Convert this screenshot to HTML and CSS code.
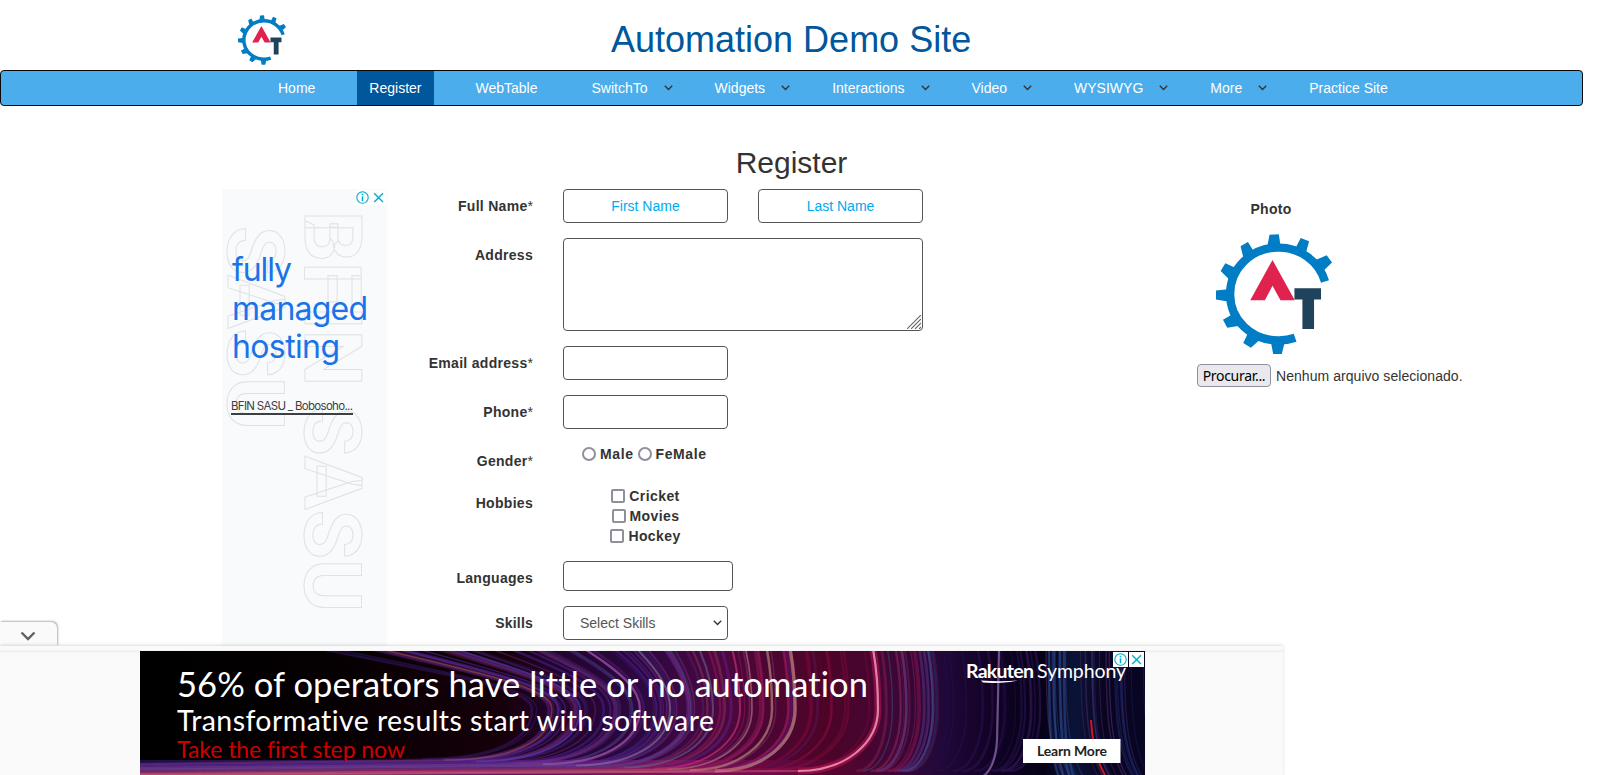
FILE: index.html
```
<!DOCTYPE html>
<html lang="en">
<head>
<meta charset="utf-8">
<title>Register</title>
<link rel="stylesheet" href="styles.css">
</head>
<body>
<svg width="0" height="0" class="defs">
  <symbol id="logo" viewBox="107 131 349 361">
    <path d="M435 274A145 142 0 0 0 292 172A143 140 0 0 0 149.500 312A143 139 0 0 0 292 451A143 139 0 0 0 345 443" fill="none" stroke="#007dc5" stroke-width="25"/>
    <path fill="#007dc5" d="M268 133L296 132 301 165 262 165ZM362 143L387 153 378 187 345 175ZM440 195L456 217 432 240 405 210ZM203 155L181 168 190 205 220 182ZM135 219L121 242 147 268 170 235ZM107 301V328L143 334V297ZM128 389L141 413 178 407 155 373ZM202 432L189 459 212 473 238 450ZM272 455L279 492H305L314 455Z"/>
    <path fill="#e0234e" d="M277 209L344 330H301L277 287 254 330H210Z"/>
    <path fill="#20435c" d="M343 294H423V328H402V417H367V328H343Z"/>
  </symbol>
  <symbol id="info" viewBox="0 0 15 15"><circle cx="7.5" cy="7.5" r="5.7" fill="none" stroke="#00aecd" stroke-width="1.1"/><path d="M7.500 6.300V11.200M7.500 3.700V5.200" fill="none" stroke="#00aecd" stroke-width="1.5"/></symbol>
  <symbol id="close" viewBox="0 0 15 15"><path d="M3.2 3.2L12 12M12 3.2L3.2 12" stroke="#00aecd" stroke-width="1.4"/></symbol>
  <symbol id="chev" viewBox="0 0 9 6"><path d="M.8 .8L4.5 4.5 8.2 .8" fill="none" stroke="currentColor" stroke-width="1.4"/></symbol>
</svg>
<div class="page">
  <header class="header">
    <svg class="logo"><use href="#logo"/></svg>
    <h1 class="title">Automation Demo Site</h1>
  </header>
  <nav class="nav">
    <a class="item">Home</a>
    <a class="item active">Register</a>
    <a class="item">WebTable</a>
    <a class="item drop">SwitchTo<svg class="chev"><use href="#chev"/></svg></a>
    <a class="item drop">Widgets<svg class="chev"><use href="#chev"/></svg></a>
    <a class="item drop">Interactions<svg class="chev"><use href="#chev"/></svg></a>
    <a class="item drop">Video<svg class="chev"><use href="#chev"/></svg></a>
    <a class="item drop">WYSIWYG<svg class="chev"><use href="#chev"/></svg></a>
    <a class="item drop">More<svg class="chev"><use href="#chev"/></svg></a>
    <a class="item">Practice Site</a>
  </nav>
  <h2 class="heading">Register</h2>
  <main class="content">
    <aside class="side-ad">
      <svg width="165" height="460" viewBox="222 189 165 460">
        <g class="outline">
          <text transform="translate(305 211) rotate(90)" textLength="401">BFIN SASU</text>
          <text transform="translate(228 226) rotate(90)" textLength="204">SASU</text>
        </g>
        <g class="slogan">
          <text x="232" y="281" textLength="60">fully</text>
          <text x="232" y="320" textLength="136">managed</text>
          <text x="232" y="358" textLength="108">hosting</text>
        </g>
        <text class="advertiser" x="231" y="410" textLength="122">BFIN SASU _ Bobosoho...</text>
        <rect x="231" y="413" width="122" height="2" fill="#3c4043"/>
        <rect x="355" y="190" width="31" height="15" fill="#fff"/>
        <use href="#info" x="355" y="190" width="15" height="15"/>
        <use href="#close" x="371" y="190" width="15" height="15"/>
      </svg>
    </aside>
    <form class="form">
      <label class="label">Full Name<i>*</i></label>
      <div class="pair"><div class="field hint">First Name</div><div class="field hint">Last Name</div></div>
      <label class="label">Address</label>
      <div class="area"><svg class="grip" viewBox="0 0 14 14"><path d="M0 14L14 0M4 14L14 4M8 14L14 8M12 14L14 12" stroke="#666" stroke-width="1.1"/></svg></div>
      <label class="label">Email address<i>*</i></label>
      <div class="field"></div>
      <label class="label">Phone<i>*</i></label>
      <div class="field"></div>
      <label class="label">Gender<i>*</i></label>
      <div class="radios"><span class="dot"></span>Male<span class="dot"></span>FeMale</div>
      <label class="label">Hobbies</label>
      <div class="checks">
        <div class="check"><span class="box"></span>Cricket</div>
        <div class="check"><span class="box"></span>Movies</div>
        <div class="check"><span class="box"></span>Hockey</div>
      </div>
      <label class="label">Languages</label>
      <div class="field langs"></div>
      <label class="label skills">Skills</label>
      <div class="field select">Select Skills<svg class="chev"><use href="#chev"/></svg></div>
    </form>
    <section class="photo">
      <div class="photo-title">Photo</div>
      <svg class="photo-logo"><use href="#logo"/></svg>
      <div class="file"><span class="browse">Procurar...</span><span class="none">Nenhum arquivo selecionado.</span></div>
    </section>
  </main>
</div>
<div class="anchor">
  <div class="tab"><svg width="16" height="10" viewBox="0 0 16 10"><path d="M1.5 1.5L8 8 14.500 1.500" fill="none" stroke="#616161" stroke-width="2.4"/></svg></div>
  <div class="tray">
    <svg class="banner" width="1005" height="124" viewBox="140 651 1005 124">
      <defs>
        <linearGradient id="bg">
          <stop offset="0" stop-color="#000"/><stop offset=".2" stop-color="#060003"/><stop offset=".36" stop-color="#16000a"/><stop offset=".41" stop-color="#22042a"/><stop offset=".5" stop-color="#2c0840"/><stop offset=".58" stop-color="#4c083e"/><stop offset=".68" stop-color="#4c0426"/><stop offset=".74" stop-color="#440634"/><stop offset=".8" stop-color="#200838"/><stop offset=".85" stop-color="#100224"/><stop offset=".9" stop-color="#060218"/><stop offset=".93" stop-color="#0a1438"/><stop offset=".96" stop-color="#0a0420"/><stop offset="1" stop-color="#080524"/>
        </linearGradient>
        <linearGradient id="floor">
          <stop offset="0" stop-color="#1c1040"/><stop offset=".3" stop-color="#3c1468"/><stop offset=".55" stop-color="#7c1060"/><stop offset=".7" stop-color="#600838" stop-opacity=".4"/><stop offset=".75" stop-color="#600838" stop-opacity="0"/>
        </linearGradient>
      </defs>
      <rect x="140" y="651" width="1005" height="124" fill="url(#bg)"/>
      <rect x="140" y="760" width="1005" height="15" fill="url(#floor)"/>
      <g id="strands" transform="translate(140 651)" fill="none"></g>
      <path d="M1091 720Q1093 755 1105 775" fill="none" stroke="#d01828" stroke-width="2"/>
      <g class="copy">
        <text x="177" y="697" font-size="34.500" textLength="691">56% of operators have little or no automation</text>
        <text x="177" y="731" font-size="28.500" textLength="537">Transformative results start with software</text>
        <text x="177" y="758" font-size="23" textLength="228" class="red">Take the first step now</text>
        <text x="966" y="678" font-size="19.500" textLength="68" class="strong">Rakuten</text>
        <text x="1037" y="678" font-size="19.500" textLength="89">Symphony</text>
      </g>
      <path d="M981 680.500Q1000 682 1018 680.500L1010 682Q995 683.500 983 682.500Z" fill="#fff"/>
      <rect x="1023" y="739" width="97.500" height="24" fill="#fff"/>
      <text x="1037" y="755.500" class="learn" textLength="70">Learn More</text>
      <rect x="1113" y="652" width="15" height="15" fill="#fff"/><rect x="1129" y="652" width="15" height="15" fill="#fff"/>
      <use href="#info" x="1113" y="652" width="15" height="15"/><use href="#close" x="1129" y="652" width="15" height="15"/>
    </svg>
  </div>
</div>
<script src="strands.js"></script>
</body>
</html>
```
FILE: styles.css
```
* { box-sizing: border-box; }
body { margin: 0; height: 775px; overflow: hidden; position: relative; background: #fff; color: #333; font: 14px/20px "Liberation Sans", Arial, sans-serif; }
svg { display: block; }
.defs { position: absolute; }
.page { width: 1583px; }
.header { height: 70px; padding: 14px 0 0 238px; display: flex; }
.logo { width: 48px; height: 52px; }
.title { margin: 6px 0 0 325px; font-size: 36px; line-height: 40px; font-weight: 400; color: #00579c; white-space: nowrap; }
.nav { height: 36px; border: 1px solid #080808; border-radius: 4px; background: #4badeb; padding-left: 265px; display: flex; gap: 30px; }
.item { display: flex; align-items: center; padding: 0 12px; height: 34px; color: #fff; white-space: nowrap; }
.item.active { background: #00579c; }
.item.drop { padding-right: 0; }
.chev { width: 9px; height: 6px; color: #333; flex: none; }
.item .chev { margin-left: 16px; }
.heading { margin: 40px 0 9px; text-align: center; font-size: 30px; line-height: 34px; font-weight: 400; }
.content { display: flex; padding-left: 222px; }
.side-ad { width: 165px; height: 460px; background: #f8fafc; }
.outline text { font: 700 80px Roboto, sans-serif; fill: none; stroke: #e0e2e5; stroke-width: 1; }
.slogan text { font: 400 32px Inter, sans-serif; fill: #1a73e8; }
.advertiser { font: 11.500px Inter, sans-serif; fill: #3c4043; }
.form { margin-left: 16px; width: 520px; display: grid; grid-template-columns: 130px 1fr; column-gap: 30px; row-gap: 15px; grid-template-rows: 34px 93px 34px 34px 27px 60px 30px 34px; align-items: start; }
.label { text-align: right; font-weight: 700; letter-spacing: .3px; padding-top: 7px; white-space: nowrap; }
.label.skills { letter-spacing: .2px; }
.label i { font-style: normal; font-weight: 400; letter-spacing: 0; }
.pair { display: flex; gap: 30px; }
.field { width: 165px; height: 34px; border: 1px solid #555; border-radius: 4px; }
.hint { color: #00a9f0; line-height: 32px; text-align: center; }
.area { position: relative; width: 360px; height: 93px; border: 1px solid #555; border-radius: 4px; }
.grip { position: absolute; right: 1px; bottom: 1px; width: 14px; height: 14px; }
.radios { display: flex; align-items: center; font-weight: 700; letter-spacing: .6px; padding-left: 19px; height: 20px; }
.dot { width: 14px; height: 14px; border: 2px solid #8f8f9d; border-radius: 50%; margin-right: 4px; }
.radios .dot:nth-of-type(2) { margin-left: 4px; }
.checks { width: 165px; font-weight: 700; letter-spacing: .4px; }
.check { display: flex; justify-content: center; align-items: center; height: 20px; }
.box { width: 14px; height: 14px; border: 2px solid #8f8f9d; border-radius: 2px; margin-right: 4px; }
.langs { width: 170px; height: 30px; }
.select { display: flex; align-items: center; justify-content: space-between; padding: 0 5px 0 16px; color: #555; }
.photo { margin-left: 274px; padding-top: 10px; }
.photo-title { width: 148px; text-align: center; font-weight: 700; letter-spacing: .3px; }
.photo-logo { width: 116px; height: 120px; margin: 15px 0 10px 19px; }
.file { display: flex; align-items: center; height: 23px; gap: 5px; white-space: nowrap; }
.browse { width: 74px; height: 23px; border: 1px solid #8f8f9d; border-radius: 4px; background: #e9e9ed; color: #000; font: 14px/21px "Noto Sans", sans-serif; letter-spacing: -.3px; text-align: center; }
.none { letter-spacing: .05px; }
.anchor { position: absolute; left: 0; top: 622px; width: 1283px; }
.tab { width: 57px; height: 24px; background: #fafafa; border-radius: 0 6px 0 0; box-shadow: 1px -1px 2px rgba(0,0,0,.3); display: flex; justify-content: center; padding: 9px 1px 0 0; }
.tray { position: relative; height: 131px; padding: 5px 0 0 140px; background: linear-gradient(#fafafa 4px, #ebebeb 5px, #fafafa 7px); box-shadow: 0 -1px 3px rgba(0,0,0,.15); }
.copy text { font-family: Lato, sans-serif; fill: #fff; font-variant-ligatures: none; }
.copy .red { fill: #cc0000; }
.copy .strong { font-weight: 700; }
.learn { font: 700 14px Lato, sans-serif; fill: #222; }
```
FILE: strands.js
```
// Draws the light trails of the banner: each sweeps down, bends left and runs along the floor.
const group = document.getElementById('strands');
let seed = 7;
const rnd = () => (seed = (seed * 16807) % 2147483647) / 2147483647;

function add(d, color, width, opacity) {
  const p = document.createElementNS('http://www.w3.org/2000/svg', 'path');
  p.setAttribute('d', d);
  p.setAttribute('stroke', color);
  p.setAttribute('stroke-width', width);
  p.setAttribute('opacity', opacity);
  group.appendChild(p);
}

function trail(b, color, width, opacity) {
  const k = Math.min(1, Math.max(0, (b - 390) / 260));
  const top = b - 5 - 210 * Math.pow(1 - k, 2.6);
  const floor = 108 + 12 * k;
  const bend = b > 740 ? 30 : 110 - 30 * k;
  let d = `M${top} -2C${(top + 2 * b) / 3} ${26 - 10 * k} ${b} 38 ${b} 58`;
  d += `C${b} 92 ${b - bend * 0.4} ${floor} ${b - bend} ${floor}`;
  add(d, color, width, opacity);
  if (b <= 740) add(`M${b - bend} ${floor}L0 ${floor + 4}`, color, width, opacity * 0.35);
}

const zones = [
  [392, 470, 22, ['#4a2090', '#5a2078', '#302070', '#6a2840']],
  [470, 560, 26, ['#6a3098', '#4c2898', '#782880', '#4a4080']],
  [560, 660, 24, ['#98185c', '#801850', '#7a305c', '#601878']],
  [660, 735, 14, ['#880c42', '#6c0732', '#561048']],
  [740, 800, 24, ['#88144c', '#5a3080', '#305084', '#701c50']],
  [800, 905, 18, ['#281450', '#200e48', '#3c185c']],
];
for (const [from, to, n, colors] of zones) {
  for (let i = 0; i < n; i++) {
    trail(from + rnd() * (to - from), colors[i % colors.length], 0.8 + rnd() * 2.2, 0.25 + rnd() * 0.4);
  }
}
for (let i = 0; i < 30; i++) {
  const x = 906 + rnd() * 98;
  add(`M${x} 0C${x} 60 ${x + 2} 100 ${x + 18} 126`, i % 3 ? '#28347c' : '#583070', 0.6 + rnd(), 0.45);
}
for (const x of [909, 914, 920, 924]) add(`M${x} 0C${x} 60 ${x} 100 ${x + 10} 126`, '#3458a0', 2.5, 0.5);

[[412, '#a05060', 1.5], [440, '#6040c0', 2], [500, '#a858a8', 2.5], [530, '#9078a0', 2],
 [573, '#706098', 2], [600, '#d03070', 2], [612, '#b08090', 1.5], [632, '#c09080', 2.5], [655, '#c89880', 3.5]]
  .forEach(([b, c, w]) => trail(b, c, w, 0.6));
trail(738, '#e01860', 7, 0.4);
trail(738, '#f098b8', 2.2, 0.85);
add('M859 0L857 90Q855 118 842 126', '#9a70b0', 2.2, 0.7);
```
